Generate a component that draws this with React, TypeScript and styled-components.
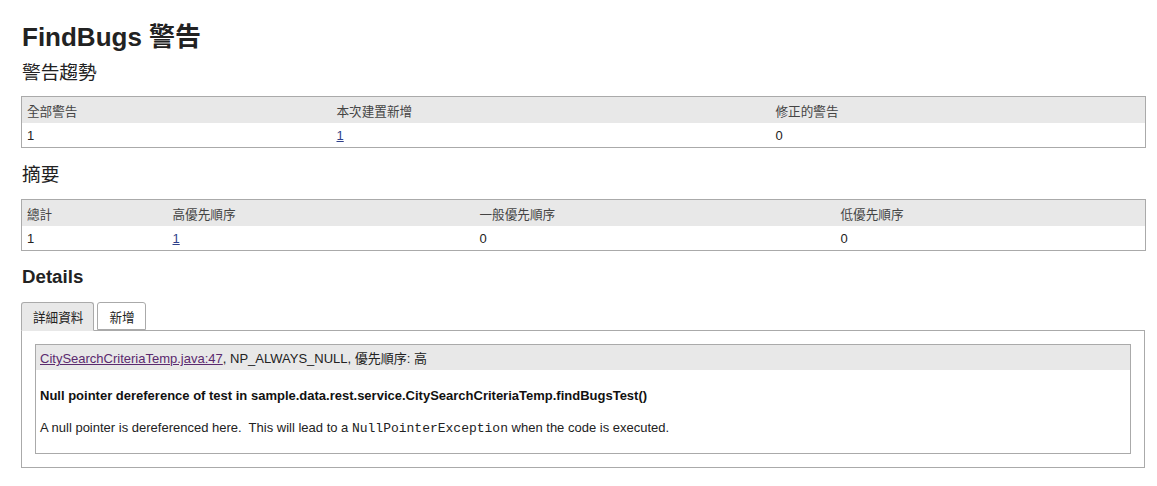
import React from "react";
import styled, { createGlobalStyle } from "styled-components";

const Global = createGlobalStyle`
  html, body { margin: 0; padding: 0; background: #fff; }
  body {
    font-family: "Liberation Sans", Arial, "Noto Sans CJK TC", sans-serif;
    color: #222;
    font-size: 13px;
  }
`;

const Page = styled.div`
  width: 1124px;
  margin-left: 21px;
  padding-top: 22px;
  padding-bottom: 19px;
`;

const Title = styled.h1`
  margin: 0;
  font-size: 26px;
  line-height: 30px;
  font-weight: bold;
  color: #222;
  padding-left: 1px;
`;

const Heading = styled.h2<{ $bold?: boolean; $top: number; $bottom: number }>`
  margin: ${(p) => p.$top}px 0 ${(p) => p.$bottom}px 0;
  font-size: 18.7px;
  line-height: 22px;
  font-weight: ${(p) => (p.$bold ? "bold" : "normal")};
  color: #222;
  padding-left: 1px;
`;

const Table = styled.table`
  width: 100%;
  border-collapse: collapse;
  table-layout: fixed;
  border: 1px solid #aaa;
`;

const HeadCell = styled.th`
  background: #e8e8e8;
  color: #444;
  font-weight: normal;
  text-align: left;
  height: 26px;
  padding: 0 5px;
  font-size: 12.6px;
`;

const Cell = styled.td`
  height: 24px;
  padding: 0 5px;
  color: #222;
  font-size: 13px;
`;

const CountLink = styled.a`
  color: #2e3f8a;
  text-decoration: underline;
`;

const Tabs = styled.div`
  display: flex;
  gap: 3px;
  align-items: flex-end;
  position: relative;
  z-index: 1;
`;

const Tab = styled.div<{ $active?: boolean }>`
  box-sizing: border-box;
  padding: 0 10px 0 11px;
  display: flex;
  align-items: center;
  border: 1px solid #aaa;
  border-bottom: 1px solid ${(p) => (p.$active ? "#e8e8e8" : "#aaa")};
  border-radius: 3px 3px 0 0;
  background: ${(p) => (p.$active ? "#e8e8e8" : "#fff")};
  color: #222;
  font-size: 12.6px;
  margin-bottom: ${(p) => (p.$active ? "-1px" : "0")};
  height: ${(p) => (p.$active ? "29px" : "28px")};
`;

const Panel = styled.div`
  border: 1px solid #aaa;
  padding: 13px;
`;

const Issue = styled.div`
  border: 1px solid #aaa;
`;

const IssueHead = styled.div`
  background: #e8e8e8;
  height: 25px;
  display: flex;
  align-items: center;
  padding: 0 4px;
  color: #222;
  font-size: 13px;
`;

const FileLink = styled.a`
  color: #5b2a6e;
  text-decoration: underline;
`;

const IssueBody = styled.div`
  padding: 18px 4px 16px;
  display: flex;
  flex-direction: column;
  gap: 16px;
`;

const Summary = styled.p`
  margin: 0;
  line-height: 16px;
  font-weight: bold;
  font-size: 13px;
  color: #111;
`;

const Desc = styled.p`
  margin: 0;
  line-height: 16px;
  font-size: 13px;
  color: #222;
  white-space: pre-wrap;
`;

const Code = styled.code`
  font-family: "Liberation Mono", "Courier New", monospace;
  font-size: 13px;
`;

const trendCols = [310, 439, 375];
const summaryCols = [146, 307, 361, 310];

export default function App() {
  return (
    <>
      <Global />
      <Page>
        <Title>FindBugs 警告</Title>
        <Heading $top={10} $bottom={12}>警告趨勢</Heading>
        <Table>
          <colgroup>
            {trendCols.map((w, i) => (
              <col key={i} style={{ width: w }} />
            ))}
          </colgroup>
          <thead>
            <tr>
              <HeadCell>全部警告</HeadCell>
              <HeadCell>本次建置新增</HeadCell>
              <HeadCell>修正的警告</HeadCell>
            </tr>
          </thead>
          <tbody>
            <tr>
              <Cell>1</Cell>
              <Cell>
                <CountLink href="#new">1</CountLink>
              </Cell>
              <Cell>0</Cell>
            </tr>
          </tbody>
        </Table>

        <Heading $top={16} $bottom={13}>摘要</Heading>
        <Table>
          <colgroup>
            {summaryCols.map((w, i) => (
              <col key={i} style={{ width: w }} />
            ))}
          </colgroup>
          <thead>
            <tr>
              <HeadCell>總計</HeadCell>
              <HeadCell>高優先順序</HeadCell>
              <HeadCell>一般優先順序</HeadCell>
              <HeadCell>低優先順序</HeadCell>
            </tr>
          </thead>
          <tbody>
            <tr>
              <Cell>1</Cell>
              <Cell>
                <CountLink href="#high">1</CountLink>
              </Cell>
              <Cell>0</Cell>
              <Cell>0</Cell>
            </tr>
          </tbody>
        </Table>

        <Heading $bold $top={15} $bottom={14}>Details</Heading>
        <Tabs>
          <Tab $active>詳細資料</Tab>
          <Tab>新增</Tab>
        </Tabs>
        <Panel>
          <Issue>
            <IssueHead>
              <span>
                <FileLink href="#source">CitySearchCriteriaTemp.java:47</FileLink>, NP_ALWAYS_NULL, 優先順序: 高
              </span>
            </IssueHead>
            <IssueBody>
              <Summary>
                Null pointer dereference of test in sample.data.rest.service.CitySearchCriteriaTemp.findBugsTest()
              </Summary>
              <Desc>
                {"A null pointer is dereferenced here.  This will lead to a "}
                <Code>NullPointerException</Code>
                {" when the code is executed."}
              </Desc>
            </IssueBody>
          </Issue>
        </Panel>
      </Page>
    </>
  );
}
